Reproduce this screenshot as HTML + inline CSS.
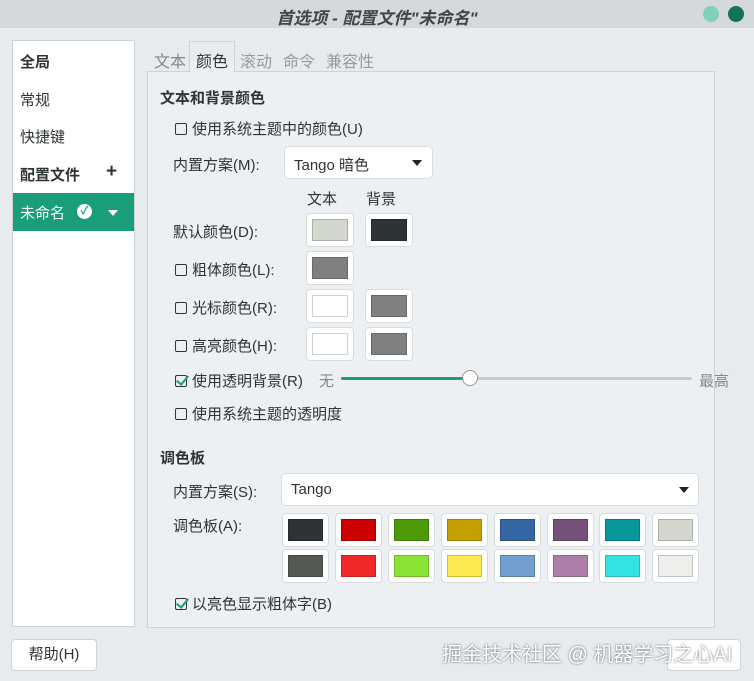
<!DOCTYPE html><html><head><meta charset="utf-8"><style>
*{margin:0;padding:0;box-sizing:border-box}
body{width:754px;height:681px;background:#e8ebee;font-family:"Liberation Sans","Noto Sans CJK SC",sans-serif;font-size:15px;color:#2e3436;position:relative;overflow:hidden}
.a{position:absolute;white-space:nowrap}
.tb{left:0;top:0;width:754px;height:28px;background:#d5d9dc}
.side{left:12px;top:40px;width:123px;height:587px;background:#fff;border:1px solid #cfd3d6}
.frame{left:147px;top:71px;width:568px;height:557px;background:#edf0f2;border:1px solid #cfd3d6}
.sw{position:absolute;width:46px;height:32px;background:#fff;border-radius:3px;box-shadow:0 0 0 1px #d8dcdf}
.sw i{position:absolute;left:5px;top:5px;right:5px;bottom:5px;border:1px solid rgba(0,0,0,.18)}
.cb{display:inline-block;width:12px;height:12px;border:1.5px solid #333;border-radius:2px;margin-right:5px;vertical-align:-1px;position:relative}
.ck::after{content:"";position:absolute;left:3px;top:-3px;width:5px;height:10px;border-right:2.5px solid #1a9d7b;border-bottom:2.5px solid #1a9d7b;transform:rotate(40deg)}
.combo{background:#fff;border-radius:4px;box-shadow:0 0 0 1px #d8dcdf}
.tri{position:absolute;width:0;height:0;border-left:5px solid transparent;border-right:5px solid transparent;border-top:6px solid #222}
</style></head><body>
<div class="a tb"></div>
<div class="a" style="left:0;top:4px;width:754px;text-align:center;font-size:17px;font-style:italic;color:#444;font-weight:bold">首选项 - 配置文件"未命名"</div>
<div class="a" style="left:703px;top:6px;width:16px;height:16px;border-radius:50%;background:#7fd1b9"></div>
<div class="a" style="left:728px;top:6px;width:16px;height:16px;border-radius:50%;background:#10735c"></div>
<div class="a side"></div>
<div class="a" style="left:20px;top:51px;font-weight:bold;font-size:15px">全局</div>
<div class="a" style="left:20px;top:89px;font-size:15px">常规</div>
<div class="a" style="left:20px;top:126px;font-size:15px">快捷键</div>
<div class="a" style="left:20px;top:164px;font-weight:bold;font-size:15px">配置文件</div>
<div class="a" style="left:106px;top:161px;font-size:19px;font-weight:bold">+</div>
<div class="a" style="left:13px;top:193px;width:121px;height:38px;background:#1a9d7b"></div>
<div class="a" style="left:20px;top:202px;font-size:15px;color:#fff">未命名</div>
<div class="a" style="left:77px;top:204px;width:15px;height:15px;border-radius:50%;background:#fff;color:#1a9d7b;font-size:11px;line-height:15px;text-align:center;font-weight:bold">✓</div>
<div class="tri" style="left:108px;top:210px;border-top-color:#fff"></div>
<div class="a frame"></div>
<div class="a" style="left:190px;top:61px;width:44px;height:11px;background:#edf0f2"></div>
<div class="a" style="left:189px;top:41px;width:46px;height:31px;border:1px solid #cfd3d6;border-bottom:none"></div>
<div class="a" style="left:154px;top:48px;font-size:16px;color:#888">文本</div>
<div class="a" style="left:196px;top:48px;font-size:16px">颜色</div>
<div class="a" style="left:240px;top:48px;font-size:16px;color:#999">滚动</div>
<div class="a" style="left:283px;top:48px;font-size:16px;color:#999">命令</div>
<div class="a" style="left:326px;top:48px;font-size:16px;color:#999">兼容性</div>
<div class="a" style="left:160px;top:87px;font-weight:bold">文本和背景颜色</div>
<div class="a" style="left:175px;top:118px"><span class="cb"></span>使用系统主题中的颜色(U)</div>
<div class="a" style="left:173px;top:154px">内置方案(M):</div>
<div class="a combo" style="left:285px;top:147px;width:147px;height:31px"></div>
<div class="a" style="left:294px;top:154px">Tango 暗色</div>
<div class="tri" style="left:412px;top:160px"></div>
<div class="a" style="left:307px;top:188px">文本</div>
<div class="a" style="left:366px;top:188px">背景</div>
<div class="a" style="left:173px;top:221px">默认颜色(D):</div>
<div class="sw" style="left:307px;top:214px"><i style="background:#d3d7cf"></i></div>
<div class="sw" style="left:366px;top:214px"><i style="background:#2e3436"></i></div>
<div class="a" style="left:175px;top:259px"><span class="cb"></span>粗体颜色(L):</div>
<div class="sw" style="left:307px;top:252px"><i style="background:#808080"></i></div>
<div class="a" style="left:175px;top:297px"><span class="cb"></span>光标颜色(R):</div>
<div class="sw" style="left:307px;top:290px"><i style="background:#fff"></i></div>
<div class="sw" style="left:366px;top:290px"><i style="background:#808080"></i></div>
<div class="a" style="left:175px;top:335px"><span class="cb"></span>高亮颜色(H):</div>
<div class="sw" style="left:307px;top:328px"><i style="background:#fff"></i></div>
<div class="sw" style="left:366px;top:328px"><i style="background:#808080"></i></div>
<div class="a" style="left:175px;top:370px"><span class="cb ck"></span>使用透明背景(R)</div>
<div class="a" style="left:319px;top:370px;color:#888">无</div>
<div class="a" style="left:341px;top:377px;width:351px;height:3px;background:#c8cbcd;border-radius:2px"></div>
<div class="a" style="left:341px;top:377px;width:129px;height:3px;background:#1a9d7b;border-radius:2px"></div>
<div class="a" style="left:462px;top:370px;width:16px;height:16px;border-radius:50%;background:#fff;border:1px solid #999"></div>
<div class="a" style="left:699px;top:370px;color:#888">最高</div>
<div class="a" style="left:175px;top:403px"><span class="cb"></span>使用系统主题的透明度</div>
<div class="a" style="left:160px;top:447px;font-weight:bold">调色板</div>
<div class="a" style="left:173px;top:481px">内置方案(S):</div>
<div class="a combo" style="left:282px;top:474px;width:416px;height:31px"></div>
<div class="a" style="left:291px;top:481px">Tango</div>
<div class="tri" style="left:679px;top:487px"></div>
<div class="a" style="left:173px;top:515px">调色板(A):</div>
<div id="pal"></div>
<div class="a" style="left:175px;top:593px"><span class="cb ck"></span>以亮色显示粗体字(B)</div>
<div class="a" style="left:12px;top:640px;width:84px;height:30px;background:#fff;border-radius:3px;box-shadow:0 0 0 1px #cfd3d6;text-align:center;line-height:30px">帮助(H)</div>
<div class="a" style="left:668px;top:640px;width:72px;height:30px;background:#fff;border-radius:3px;box-shadow:0 0 0 1px #cfd3d6"></div>
<div class="a" style="left:442px;top:638px;font-size:20px;color:#fff;text-shadow:0 0 2px #555">掘金技术社区 @ 机器学习之心AI</div>
<script>
var c1=["#2e3436","#cc0000","#4e9a06","#c4a000","#3465a4","#75507b","#06989a","#d3d7cf"],c2=["#555753","#ef2929","#8ae234","#fce94f","#729fcf","#ad7fa8","#34e2e2","#eeeeec"],h="";
for(var i=0;i<8;i++){h+='<div class="sw" style="left:'+(283+i*52.9)+'px;top:514px;width:45px"><i style="background:'+c1[i]+'"></i></div>';h+='<div class="sw" style="left:'+(283+i*52.9)+'px;top:550px;width:45px"><i style="background:'+c2[i]+'"></i></div>';}
document.getElementById("pal").innerHTML=h;
</script>
</body></html>
